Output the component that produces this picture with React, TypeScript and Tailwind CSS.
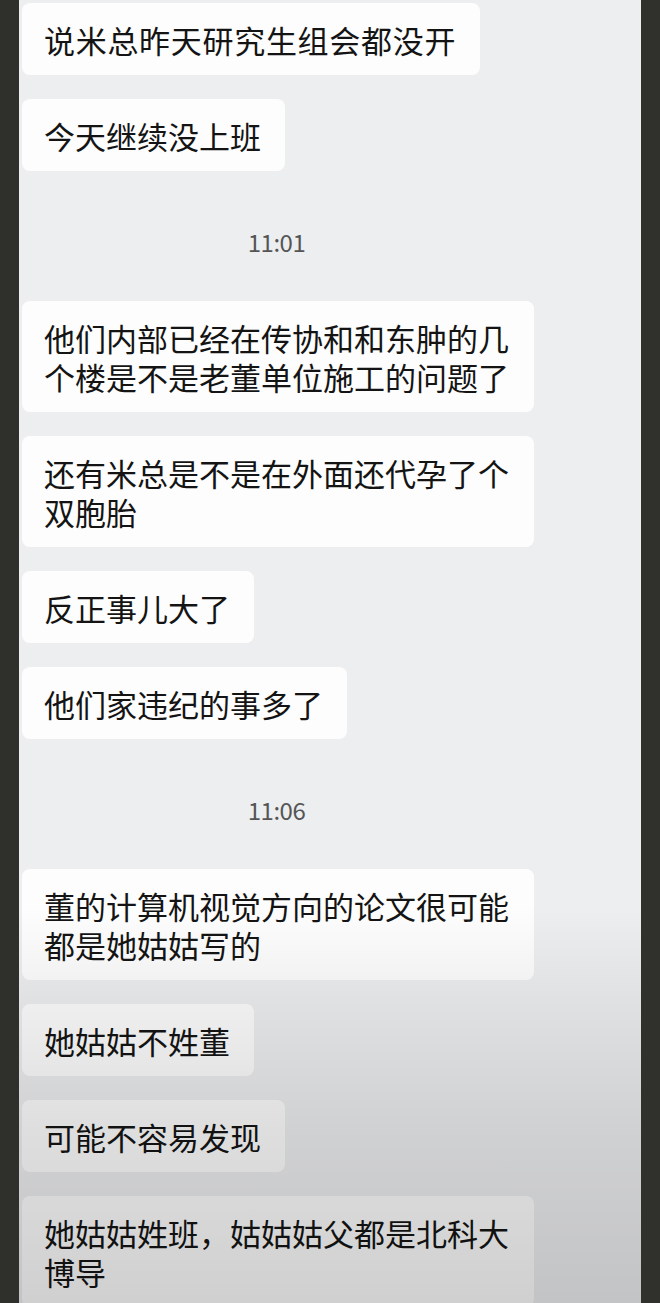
import React from "react"

const cjk = { fontFamily: '"Noto Sans CJK SC", "Noto Sans", sans-serif' }

type Item = { kind: "msg"; text: string; wide?: boolean } | { kind: "time"; text: string }

const items: Item[] = [
  { kind: "msg", text: "说米总昨天研究生组会都没开", wide: true },
  { kind: "msg", text: "今天继续没上班" },
  { kind: "time", text: "11:01" },
  { kind: "msg", text: "他们内部已经在传协和和东肿的几个楼是不是老董单位施工的问题了" },
  { kind: "msg", text: "还有米总是不是在外面还代孕了个双胞胎" },
  { kind: "msg", text: "反正事儿大了" },
  { kind: "msg", text: "他们家违纪的事多了" },
  { kind: "time", text: "11:06" },
  { kind: "msg", text: "董的计算机视觉方向的论文很可能都是她姑姑写的" },
  { kind: "msg", text: "她姑姑不姓董" },
  { kind: "msg", text: "可能不容易发现" },
  { kind: "msg", text: "她姑姑姓班，姑姑姑父都是北科大博导" },
]

function Bubble({ text, wide }: { text: string; wide?: boolean }) {
  return (
    <div className="w-fit rounded-[8px] bg-[#fdfdfd] pl-[22px] pr-[24px] pt-[17px] pb-[16px]">
      <p
        className={"max-w-[466px] text-[31px] leading-[39px] text-[#141414] " + (wide ? "tracking-[0.7px]" : "")}
        style={cjk}
      >
        {text}
      </p>
    </div>
  )
}

function TimeStamp({ text }: { text: string }) {
  return (
    <div className="flex h-[82px] justify-center pt-[12px] pr-[110px]">
      <div className="flex items-center">
        <span
          className="text-[24px] leading-[70px] tracking-[-0.5px] text-[#555555]"
          style={{ fontFamily: '"Noto Sans CJK SC", sans-serif' }}
        >
          {text}
        </span>
      </div>
    </div>
  )
}

export default function App() {
  return (
    <div className="flex h-[1303px] w-[660px] flex-col overflow-hidden bg-[#2f302c]">
      <div className="h-[4px] bg-[#1b1c1a]" />
      <div className="flex flex-1">
        <div className="w-[19px] bg-[#2f302c]" />
        <div className="relative flex-1 overflow-hidden bg-[#edeef0]">
          <div className="flex flex-col gap-6 pl-[3px] pt-[3px]">
            {items.map((it, i) =>
              it.kind === "msg" ? (
                <Bubble key={i} text={it.text} wide={it.wide} />
              ) : (
                <TimeStamp key={i} text={it.text} />
              ),
            )}
          </div>
          {/* screenshot gets darker toward the bottom */}
          <div className="pointer-events-none absolute inset-x-0 bottom-0 h-[400px] bg-[linear-gradient(to_bottom,rgba(0,0,0,0)_0%,rgba(0,0,0,0.06)_25%,rgba(0,0,0,0.12)_55%,rgba(0,0,0,0.18)_100%)]" />
        </div>
        <div className="w-[19px] bg-[#30312d]" />
      </div>
    </div>
  )
}
